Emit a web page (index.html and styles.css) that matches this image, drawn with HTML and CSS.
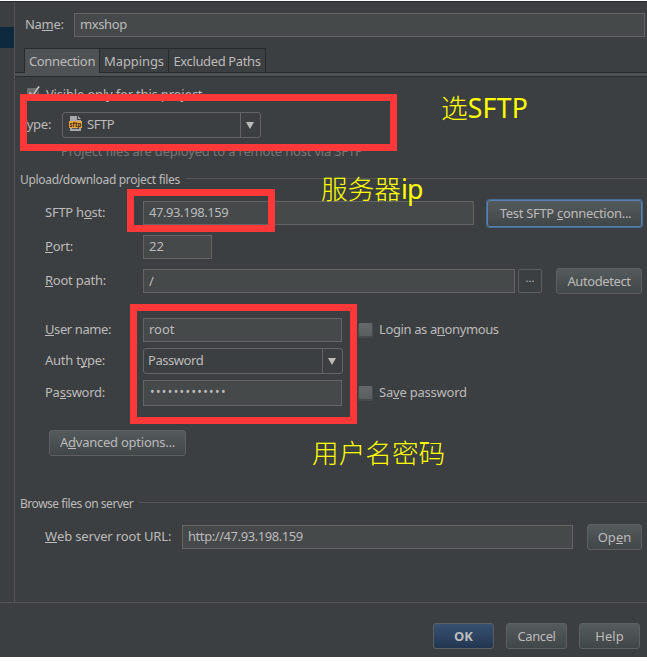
FILE: index.html
```html
<!DOCTYPE html>
<html lang="zh-CN">
<head>
<meta charset="utf-8">
<title>Deployment</title>
<link rel="stylesheet" href="styles.css">
</head>
<body>
<div class="window">
  <div class="main">
    <aside class="sidebar"><div class="selected"></div></aside>
    <main class="content">
      <div class="row name-row"><label class="label name-label">Na<u>m</u>e:</label><div class="field grow">mxshop</div></div>
      <nav class="tabs"><span class="tab active t1">Connection</span><span class="tab t2">Mappings</span><span class="tab t3">Excluded Paths</span></nav>
      <div class="strip"></div>
      <div class="row visible-row">
        <svg class="check" width="16" height="16" viewBox="0 0 16 16"><rect x="1" y="2" width="12" height="12" rx="1" fill="#6b6e6f"/><path d="M3.5 7.5 6.5 11 13 1" fill="none" stroke="#2f3233" stroke-width="3"/><path d="M3.5 6.5 6.5 10 13 .5" fill="none" stroke="#bbb" stroke-width="2"/></svg>
        <span class="visible-text">Visible only for this project</span>
      </div>
      <div class="row type-row"><label class="label type-label">Type:</label>
        <div class="combo type-combo">
          <svg class="file" width="14" height="16" viewBox="0 0 14 16"><path d="M1 0h7v4h4v11H1z" fill="#a5a7a8"/><path d="M9 0l3 3H9z" fill="#a5a7a8"/><path d="M3 12.5h7" stroke="#55585a"/><rect y="5" width="13" height="7" fill="#f0a33c"/><text x="6.5" y="10.7" text-anchor="middle" textLength="12" lengthAdjust="spacingAndGlyphs" class="badge">sftp</text></svg>
          <span>SFTP</span><i class="arrow"></i></div>
      </div>
      <div class="hint">Project files are deployed to a remote host via SFTP</div>
      <div class="section upload"><span>Upload/download project files</span><i></i></div>
      <div class="row host-row"><label class="label host">SFTP h<u>o</u>st:</label><div class="field grow num">47.93.198.159</div><div class="button focus">Test SFTP <u>c</u>onnection...</div></div>
      <div class="row port-row"><label class="label"><u>P</u>ort:</label><div class="field port">22</div></div>
      <div class="row root-row"><label class="label root"><u>R</u>oot path:</label><div class="field grow path">/</div><div class="dots">...</div><div class="button auto">Autodetect</div></div>
      <div class="row user-row"><label class="label user"><u>U</u>ser name:</label><div class="field cred">root</div><i class="box"></i><span class="anon">Login as a<u>n</u>onymous</span></div>
      <div class="row auth-row"><label class="label">Auth t<u>y</u>pe:</label><div class="combo auth"><span>Password</span><i class="arrow"></i></div></div>
      <div class="row pass-row"><label class="label">Pa<u>s</u>sword:</label><div class="field cred pass">•••••••••••••</div><i class="box"></i><span class="save">Sa<u>v</u>e password</span></div>
      <div class="button advanced">A<u>d</u>vanced options...</div>
      <div class="section browse"><span>Browse files on server</span><i></i></div>
      <div class="row web-row"><label class="label web"><u>W</u>eb server root URL:</label><div class="field grow num">http://47.93.198.159</div><div class="button open">Op<u>e</u>n</div></div>
    </main>
  </div>
  <footer class="footer"><div class="button ok">OK</div><div class="button cancel">Cancel</div><div class="button">Help</div></footer>
  <div class="mark mark-type"></div>
  <div class="mark mark-host"></div>
  <div class="mark mark-user"></div>
  <div class="note note-type">选<b>SFTP</b></div>
  <div class="note note-host">服务器<b class="ip">ip</b></div>
  <div class="note note-user">用户名密码</div>
</div>
</body>
</html>
```
FILE: styles.css
```css
* { box-sizing: border-box; }
body { margin: 0; padding-top: 1px; height: 661px; background: #fff; overflow: hidden; font: 13px/18px "Noto Sans", "Noto Sans CJK SC", sans-serif; color: #bbb; }
u { text-decoration: none; box-shadow: 0 1px 0 #bbb; display: inline-block; height: 15px; line-height: 18px; }
.window { position: relative; height: 656px; background: #3c3f41; border-top: 1px solid #25292b; display: flex; flex-direction: column; white-space: nowrap; }
.main { height: 601px; display: flex; border-bottom: 1px solid #555; }
.sidebar { width: 15px; border-right: 1px solid #555; padding-top: 25px; }
.selected { height: 21px; background: #0d293e; }
.content { flex: 1; min-width: 0; }
.row { display: flex; align-items: center; height: 26px; padding: 0 5px 0 30px; }
.label { width: 98px; flex: none; letter-spacing: -.25px; padding-bottom: 2px; }
.field { height: 24px; border: 1px solid #646464; background: #45494a; padding: 0 5px; line-height: 21px; }
.num { letter-spacing: -.43px; }
.grow { flex: 1; }
.path { line-height: 23px; }
.name-row { margin-top: 10px; padding: 0 2px 0 10px; }
.name-row .field { letter-spacing: -.4px; }
.name-label { width: 49px; letter-spacing: -.3px; }
.tabs { display: flex; height: 24px; margin: 10px 0 0 9px; }
.tab { border: 1px solid #282b2c; border-bottom: 0; border-left: 0; line-height: 25px; height: 24px; text-align: center; }
.tab.active { border-left: 1px solid #282b2c; background: #4e5254; height: 25px; position: relative; }
.t1 { width: 76px; letter-spacing: -.35px; }
.t2 { width: 69px; letter-spacing: -.1px; }
.t3 { width: 97px; letter-spacing: -.38px; }
.strip { height: 5px; background: #4e5254; border: solid #282b2c; border-width: 1px 0; }
.visible-row { height: 18px; margin-top: 8px; padding-left: 11px; letter-spacing: -.18px; }
.check { margin-right: 4px; }
.type-row { margin-top: 9px; padding-left: 5px; }
.type-label { width: 42px; }
.combo { display: flex; align-items: center; height: 26px; border: 1px solid #646464; border-radius: 3px; padding-left: 5px; letter-spacing: -.45px; }
.combo span { padding-bottom: 2px; }
.type-combo { width: 199px; padding-left: 6px; }
.file { margin: 0 4px 2px 0; }
.badge { font: 700 7px "Noto Sans", sans-serif; fill: #3a3021; letter-spacing: 0; }
.arrow { width: 20px; height: 24px; margin-left: auto; border-left: 1px solid #646464; display: flex; align-items: center; justify-content: center; padding-right: 2px; }
.arrow::before { content: ""; border: 4px solid transparent; border-top: 7px solid #bbb; border-bottom: 0; }
.hint { margin: 4px 0 0 46px; color: #777; height: 18px; letter-spacing: -.18px; }
.section { display: flex; align-items: center; height: 18px; margin-left: 5px; font-size: 12px; }
.section i { flex: 1; height: 1px; background: #555; margin: 0 0 4px 6px; }
.upload { margin-top: 11px; letter-spacing: -.32px; }
.host-row { height: 28px; margin-top: 10px; }
.button { height: 26px; border: 1px solid #5e6060; border-radius: 3px; background: linear-gradient(#555a5c, #414648); text-align: center; line-height: 24px; }
.focus { width: 155px; height: 27px; margin-left: 13px; border: 1px solid #5781b5; box-shadow: 0 0 0 1px #466d94; letter-spacing: -.3px; padding-left: 2px; }
.port-row { margin-top: 7px; }
.port { width: 69px; }
.root-row { margin-top: 8px; }
.dots { width: 24px; height: 24px; border: 1px solid #5e6060; border-radius: 2px; margin-left: 3px; text-align: center; line-height: 16px; font-size: 11px; }
.auto { width: 86px; margin-left: 14px; letter-spacing: -.4px; }
.user-row { margin-top: 23px; }
.user { letter-spacing: -.4px; }
.cred { width: 199px; }
.box { width: 13px; height: 13px; margin: 0 7px 1px 17px; background: linear-gradient(#656869, #5b5e5f); border-radius: 1px; box-shadow: 0 1px 0 1px #484b4c; }
.anon { letter-spacing: -.38px; padding-bottom: 2px; }
.save { letter-spacing: -.22px; padding-bottom: 2px; }
.auth-row { margin-top: 5px; }
.auth { width: 200px; padding-left: 4px; }
.pass-row { margin-top: 6px; }
.pass { height: 26px; letter-spacing: 1.4px; font-size: 12px; padding-left: 6px; line-height: 22px; }
.advanced { width: 137px; margin: 24px 0 0 34px; letter-spacing: -.25px; line-height: 23px; }
.browse { margin-top: 39px; letter-spacing: -.47px; }
.web-row { margin-top: 11px; }
.web { width: 137px; letter-spacing: -.15px; }
.open { width: 55px; margin-left: 14px; }
.footer { display: flex; gap: 12px; padding: 20px 7px 0 0; justify-content: flex-end; }
.footer .button { width: 61px; }
.footer .cancel { letter-spacing: -.4px; }
.footer .ok { background: linear-gradient(#375172, #233651); font-weight: 700; }
.mark { position: absolute; border: 7px solid #fd3838; }
.mark-type { left: 20px; top: 92px; width: 377px; height: 57px; }
.mark-host { left: 127px; top: 187px; width: 148px; height: 43px; }
.mark-user { left: 130px; top: 302px; width: 227px; height: 120px; }
.note { position: absolute; color: #ff0; font: 300 26.67px/32px "Noto Sans", "Noto Sans CJK SC", sans-serif; }
.note b { font-weight: 400; letter-spacing: .3px; }
.note .ip { letter-spacing: -.8px; }
.note-type { left: 441px; top: 90px; }
.note-host { left: 321px; top: 171px; }
.note-user { left: 312px; top: 435px; }
```
